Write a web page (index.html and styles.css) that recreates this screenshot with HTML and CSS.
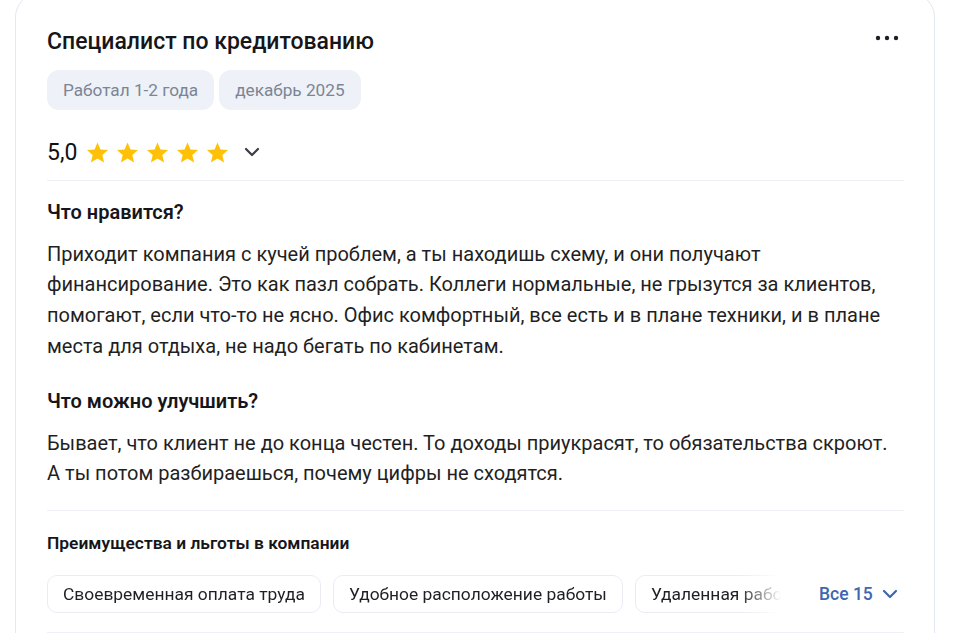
FILE: index.html
```html
<!DOCTYPE html>
<html lang="ru">
<head>
<meta charset="utf-8">
<link rel="stylesheet" href="styles.css">
</head>
<body>
<div class="card">
  <div class="head">
    <h2 class="title">Специалист по кредитованию</h2>
    <button class="more" aria-label="Ещё">
      <svg width="24" height="6" viewBox="0 0 24 6"><circle cx="3" cy="3" r="2.2"/><circle cx="12" cy="3" r="2.2"/><circle cx="21" cy="3" r="2.2"/></svg>
    </button>
  </div>
  <div class="tags">
    <span class="tag">Работал 1-2 года</span>
    <span class="tag">декабрь 2025</span>
  </div>
  <div class="rating">
    <span class="score">5,0</span>
    <span class="stars">
      <svg class="star" viewBox="0 0 24 24"><path d="M12 1.6l3.1 7.3 7.9.6-6 5.2 1.9 7.7L12 18.3l-6.9 4.1 1.9-7.7-6-5.2 7.9-.6z"/></svg>
      <svg class="star" viewBox="0 0 24 24"><path d="M12 1.6l3.1 7.3 7.9.6-6 5.2 1.9 7.7L12 18.3l-6.9 4.1 1.9-7.7-6-5.2 7.9-.6z"/></svg>
      <svg class="star" viewBox="0 0 24 24"><path d="M12 1.6l3.1 7.3 7.9.6-6 5.2 1.9 7.7L12 18.3l-6.9 4.1 1.9-7.7-6-5.2 7.9-.6z"/></svg>
      <svg class="star" viewBox="0 0 24 24"><path d="M12 1.6l3.1 7.3 7.9.6-6 5.2 1.9 7.7L12 18.3l-6.9 4.1 1.9-7.7-6-5.2 7.9-.6z"/></svg>
      <svg class="star" viewBox="0 0 24 24"><path d="M12 1.6l3.1 7.3 7.9.6-6 5.2 1.9 7.7L12 18.3l-6.9 4.1 1.9-7.7-6-5.2 7.9-.6z"/></svg>
    </span>
    <svg class="chev" width="16" height="10" viewBox="0 0 16 10"><path d="M2 2l6 6 6-6"/></svg>
  </div>
  <div class="divider"></div>
  <h3 class="q q-first">Что нравится?</h3>
  <p class="answer">Приходит компания с кучей проблем, а ты находишь схему, и они получают финансирование. Это как пазл собрать. Коллеги нормальные, не грызутся за клиентов, помогают, если что-то не ясно. Офис комфортный, все есть и в плане техники, и в плане места для отдыха, не надо бегать по кабинетам.</p>
  <h3 class="q">Что можно улучшить?</h3>
  <p class="answer">Бывает, что клиент не до конца честен. То доходы приукрасят, то обязательства скроют. А ты потом разбираешься, почему цифры не сходятся.</p>
  <div class="divider d2"></div>
  <h4 class="benefits-title">Преимущества и льготы в компании</h4>
  <div class="benefits">
    <div class="benefit-list">
      <span class="benefit">Своевременная оплата труда</span>
      <span class="benefit">Удобное расположение работы</span>
      <span class="benefit">Удаленная работа</span>
    </div>
    <button class="all">Все 15
      <svg width="16" height="10" viewBox="0 0 16 10"><path d="M2 2l6 6 6-6"/></svg>
    </button>
  </div>
  <div class="divider d3"></div>
</div>
</body>
</html>
```
FILE: styles.css
```css
* { box-sizing: border-box; }
html, body { margin: 0; padding: 0; background: #fff; }
body {
  font-family: Roboto, "Noto Sans", "Liberation Sans", sans-serif;
  color: #1b1b1f;
  overflow: hidden;
}
.card {
  margin: -7px 0 0 15px;
  width: 920px;
  height: 700px;
  border: 1px solid #e3e7ef;
  border-radius: 24px;
  padding: 33px 30px 0 31px;
}
.head {
  display: flex;
  justify-content: space-between;
  align-items: center;
  height: 30px;
}
.title {
  margin: 0;
  font-size: 23px;
  font-weight: 500;
  line-height: 30px;
  color: #16161a;
}
.more {
  border: 0;
  background: none;
  padding: 0;
  margin: -9px 5px 0 0;
  width: 24px;
  height: 6px;
  display: flex;
}
.more svg { fill: #1c1f26; }
.tags {
  display: flex;
  gap: 5px;
  margin-top: 13px;
}
.tag {
  height: 40px;
  display: inline-flex;
  align-items: center;
  padding: 0 16px;
  border-radius: 12px;
  background: #eef1f7;
  color: #7b8594;
  font-size: 17.2px;
}
.rating {
  display: flex;
  align-items: center;
  height: 32px;
  margin-top: 26px;
}
.score {
  font-size: 23px;
  color: #111;
  margin-right: 9px;
}
.stars { display: flex; gap: 7px; }
.star { width: 23px; height: 23px; fill: #ffc107; }
.chev {
  margin-left: 15px;
  fill: none;
  stroke: #3a3d44;
  stroke-width: 2.2;
  stroke-linecap: round;
  stroke-linejoin: round;
}
.divider {
  height: 1px;
  background: #eef0f5;
  margin-top: 12px;
}
.q {
  margin: 0;
  font-size: 20px;
  font-weight: 600;
  line-height: 26px;
  margin-top: 27px;
  color: #16161a;
}
.q-first { margin-top: 18px; }
.answer {
  margin: 13.5px 0 0;
  font-size: 20px;
  line-height: 30.67px;
  color: #1f1f24;
}
.d2 { margin-top: 21px; }
.benefits-title {
  margin: 20px 0 0;
  font-size: 17.4px;
  font-weight: 600;
  line-height: 24px;
  color: #16161a;
}
.benefits {
  display: flex;
  align-items: center;
  margin-top: 20px;
}
.benefit-list {
  display: flex;
  gap: 12px;
  width: 744px;
  flex: none;
  overflow: hidden;
  -webkit-mask-image: linear-gradient(to right, #000 692px, transparent 734px);
  mask-image: linear-gradient(to right, #000 692px, transparent 734px);
}
.benefit {
  flex: none;
  height: 38px;
  display: inline-flex;
  align-items: center;
  padding: 0 15px;
  border: 1px solid #e9ecf3;
  border-radius: 10px;
  font-size: 17.4px;
  color: #1f1f24;
  white-space: nowrap;
}
.all {
  margin-left: 28px;
  border: 0;
  background: none;
  padding: 0;
  font-family: inherit;
  font-size: 17.5px;
  font-weight: 500;
  color: #3d67ae;
  display: flex;
  align-items: center;
  gap: 9px;
}
.all svg {
  fill: none;
  stroke: #3d67ae;
  stroke-width: 2.2;
  stroke-linecap: round;
  stroke-linejoin: round;
}
.d3 { margin-top: 19px; }
```
